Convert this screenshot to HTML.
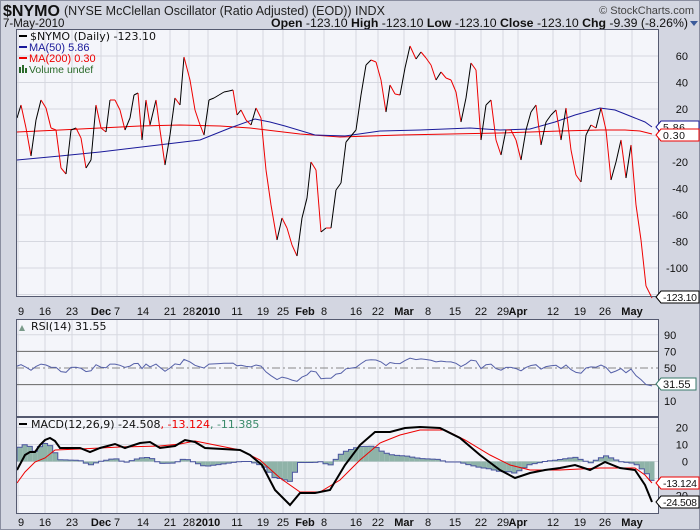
<!DOCTYPE html>
<html><head><meta charset="utf-8"><style>
body{margin:0;background:#d3d6e1;width:700px;height:530px;overflow:hidden;font-family:"Liberation Sans",sans-serif}
svg{position:absolute;left:0;top:0}
</style></head><body>
<svg id="s" width="700" height="530" xmlns="http://www.w3.org/2000/svg" font-family="Liberation Sans, sans-serif">
<rect x="0" y="0" width="700" height="530" fill="#d3d6e1"/>
<rect x="0.5" y="0.5" width="699" height="529" fill="none" stroke="#8a8ea0"/>
<text x="3" y="16" font-size="16" font-weight="bold" fill="#111">$NYMO</text>
<text x="64" y="15" font-size="12.5" fill="#222">(NYSE McClellan Oscillator (Ratio Adjusted) (EOD))  INDX</text>
<text x="3" y="27" font-size="11.5" fill="#111">7-May-2010</text>
<text x="694" y="14" font-size="11" fill="#444" text-anchor="end">© StockCharts.com</text>
<text x="688" y="27" font-size="12.3" fill="#111" text-anchor="end"><tspan font-weight="bold">Open</tspan> -123.10  <tspan font-weight="bold">High</tspan> -123.10  <tspan font-weight="bold">Low</tspan> -123.10  <tspan font-weight="bold">Close</tspan> -123.10  <tspan font-weight="bold">Chg</tspan> -9.39 (-8.26%)</text>
<path d="M690 21 L698 21 L694 26Z" fill="#3a5a9a"/>
<g id="g"></g>
</svg>
<script>
var g=document.getElementById('g'),h='';
function P(a){return a.map(function(p){return p[0]+','+p[1]}).join(' ')}
var L=16,R=659;
var xs=[18,45,72,101,117,143,170,189,208,237,263,283,305,324,356,378,404,428,455,481,503,518,553,580,605,632];
var xl=['9','16','23','Dec','7','14','21','28','2010','11','19','25','Feb','8','16','22','Mar','8','15','22','29','Apr','12','19','26','May'];
var bold={3:1,8:1,12:1,16:1,21:1,25:1};
function panel(t,b){
 h+='<rect x="'+L+'" y="'+t+'" width="'+(R-L)+'" height="'+(b-t)+'" fill="#f4f5fa"/>';
 xs.forEach(function(x){h+='<line x1="'+x+'" y1="'+t+'" x2="'+x+'" y2="'+b+'" stroke="#d6d8e0"/>';});
}
function border(t,b){h+='<rect x="'+(L+.5)+'" y="'+(t+.5)+'" width="'+(R-L-1)+'" height="'+(b-t-1)+'" fill="none" stroke="#555a70"/>';}
function dates(y){xs.forEach(function(x,i){h+='<text x="'+x+'" y="'+y+'" font-size="11" '+(bold[i]?'font-weight="bold" font-size="12"':'')+' text-anchor="'+(i==0?'start':'middle')+'" fill="#111">'+xl[i]+'</text>';});}
panel(29,297);
function my(v){return 135.5-v*1.325}
for(var v=-120;v<=80;v+=20){var y=my(v);h+='<line x1="'+L+'" y1="'+y+'" x2="'+R+'" y2="'+y+'" stroke="#d6d8e0"/>';if(v>-120&&v<80)h+='<text x="688" y="'+(y+4)+'" font-size="11" text-anchor="end" fill="#111">'+v+'</text>';}
var ny=[[17,118],[21,105],[26,128],[31,156],[36,120],[41,100],[46,108],[51,128],[56,130],[61,168],[66,174],[71,130],[76,128],[81,138],[86,168],[91,160],[96,105],[101,128],[106,132],[110,100],[115,100],[120,110],[125,130],[130,118],[134,95],[138,93],[142,140],[146,100],[150,125],[156,100],[160,130],[165,165],[170,135],[175,98],[180,105],[184,57],[190,80],[195,110],[199,122],[204,135],[209,100],[214,98],[219,95],[224,92],[229,91],[233,90],[237,115],[241,110],[246,120],[251,125],[256,108],[261,118],[266,170],[271,205],[277,240],[282,218],[287,228],[292,245],[297,256],[302,218],[307,198],[311,162],[316,170],[321,232],[326,228],[331,228],[336,190],[341,183],[346,142],[351,136],[356,130],[361,95],[366,65],[371,60],[376,62],[381,80],[386,112],[390,85],[395,94],[400,95],[405,68],[410,46],[416,59],[421,52],[426,58],[431,65],[436,80],[441,72],[446,78],[451,80],[456,92],[461,122],[466,98],[471,63],[476,70],[481,140],[486,105],[491,100],[496,140],[501,155],[506,130],[511,130],[516,140],[521,160],[526,130],[531,112],[536,105],[541,145],[546,122],[551,115],[556,110],[561,140],[566,108],[571,150],[576,175],[581,182],[586,135],[591,125],[596,128],[601,108],[606,130],[611,180],[616,162],[621,140],[626,178],[631,145],[636,205],[641,240],[646,286],[652,298]];
var ma50=[[17,160],[60,156],[100,152],[150,146],[200,140],[230,128],[255,119],[270,122],[285,126],[315,135],[345,136],[380,131],[420,130],[470,128],[500,130],[530,129],[555,122],[575,115],[600,108],[615,110],[630,116],[645,122],[652,127]];
var ma200=[[17,132],[60,130],[100,128],[140,126],[180,125],[220,126],[250,128],[300,134],[340,137],[400,135],[450,134],[500,133],[560,131],[600,130],[625,130],[640,131],[652,134]];
h+='<polyline points="'+P(ma200)+'" fill="none" stroke="#e00" stroke-width="1"/>';
h+='<polyline points="'+P(ma50)+'" fill="none" stroke="#1a1a9a" stroke-width="1"/>';
for(var i=1;i<ny.length;i++){var a=ny[i-1],b=ny[i];h+='<line x1="'+a[0]+'" y1="'+a[1]+'" x2="'+b[0]+'" y2="'+b[1]+'" stroke="'+(b[1]<a[1]?'#000':'#e00')+'"/>';}
border(29,297);
h+='<rect x="19" y="35" width="8" height="2" fill="#000"/><text x="30" y="40" font-size="11" fill="#111" font-family="DejaVu Sans">$NYMO (Daily) -123.10</text>';
h+='<rect x="19" y="46" width="8" height="2" fill="#1a1a9a"/><text x="29" y="51" font-size="11" fill="#1a1a9a">MA(50) 5.86</text>';
h+='<rect x="19" y="57" width="8" height="2" fill="#e00"/><text x="29" y="62" font-size="11" fill="#e00">MA(200) 0.30</text>';
h+='<rect x="19" y="67" width="2" height="6" fill="#2a6a2a"/><rect x="22" y="65" width="2" height="8" fill="#2a6a2a"/><rect x="25" y="68" width="2" height="5" fill="#2a6a2a"/><text x="29" y="73" font-size="10.5" fill="#2a6a2a">Volume undef</text>';
function tag(y,txt,col){h+='<path d="M656 '+y+' L661 '+(y-6)+' L699 '+(y-6)+' L699 '+(y+6)+' L661 '+(y+6)+'Z" fill="#fff" stroke="'+col+'"/><text x="663" y="'+(y+4)+'" font-size="10.5" fill="#111" textLength="'+(txt.length>5?34:22)+'">'+txt+'</text>';}
tag(127,'5.86','#1a1a9a');tag(135,'0.30','#e00');tag(297,'-123.10','#000');
dates(315);
panel(319,417);
function ry(v){return 368-(v-50)*0.83}
[10,30,50,70,90].forEach(function(v){var y=ry(v);h+='<line x1="'+L+'" y1="'+y+'" x2="'+R+'" y2="'+y+'" stroke="'+((v==30||v==70)?'#666':(v==50?'#888':'#d6d8e0'))+'" '+(v==50?'stroke-dasharray="8,3,2,3"':'')+'/><text x="664" y="'+(y+4)+'" font-size="11" fill="#111">'+v+'</text>';});
var rs=ny.map(function(p){return [p[0],(368+(p[1]-135)*0.11).toFixed(1)]});
h+='<polyline points="'+P(rs)+'" fill="none" stroke="#5560a8"/>';
border(319,417);
h+='<path d="M19 331 L22 325 L25 331Z" fill="#7a9a8a"/><text x="31" y="330" font-size="11" fill="#111" font-family="DejaVu Sans">RSI(14) 31.55</text>';
h+='<path d="M656 384 L661 378 L696 378 L696 390 L661 390Z" fill="#fff" stroke="#3a7a6a"/><text x="663" y="388" font-size="11" fill="#111">31.55</text>';
panel(417,514);
function zy(v){return 461.5-v*1.7}
[-20,-10,0,10,20].forEach(function(v){var y=zy(v);h+='<line x1="'+L+'" y1="'+y+'" x2="'+R+'" y2="'+y+'" stroke="#d6d8e0"/>';if(v>=0||v==-20)h+='<text x="688" y="'+(y+4)+'" font-size="11" text-anchor="end" fill="#111">'+v+'</text>';});
var mb=[[17,470],[25,455],[30,452],[35,452],[40,445],[45,440],[50,438],[55,441],[60,448],[80,448],[90,452],[100,448],[115,444],[125,448],[140,443],[150,442],[160,448],[175,446],[185,440],[195,442],[205,448],[240,450],[250,455],[262,465],[275,490],[290,505],[300,493],[315,493],[330,490],[345,465],[360,445],[375,432],[390,432],[405,428],[420,427],[440,428],[460,438],[480,455],[500,470],[515,478],[530,473],[545,470],[560,468],[575,465],[590,470],[605,462],[620,468],[635,470],[645,485],[652,502]];
var ms=[[17,483],[25,472],[35,462],[45,458],[55,450],[80,449],[120,447],[160,446],[180,444],[195,441],[215,445],[240,450],[260,460],[280,478],[300,492],[320,492],[340,480],[360,460],[380,443],[400,435],[420,430],[445,430],[465,440],[490,455],[510,465],[530,470],[560,470],[600,468],[635,468],[645,475],[652,483]];
function interp(a,x){for(var i=1;i<a.length;i++){if(x<=a[i][0]){var p=a[i-1],q=a[i];return p[1]+(q[1]-p[1])*(x-p[0])/(q[0]-p[0]);}}return a[a.length-1][1];}
var step='M17 461.5 ';
for(var x=17;x<652;x+=5.1){var d=interp(mb,x+2.5)-interp(ms,x+2.5);var yb=461.5+d;
 h+='<rect x="'+x.toFixed(1)+'" y="'+Math.min(yb,461.5).toFixed(1)+'" width="5.1" height="'+Math.abs(d).toFixed(1)+'" fill="#8fb3a8"/>';
 step+='L'+x.toFixed(1)+' '+yb.toFixed(1)+' L'+(x+5.1).toFixed(1)+' '+yb.toFixed(1)+' ';}
h+='<path d="'+step+'" fill="none" stroke="#4a55a0"/>';
h+='<polyline points="'+P(ms)+'" fill="none" stroke="#e00"/>';
h+='<polyline points="'+P(mb)+'" fill="none" stroke="#000" stroke-width="2"/>';
border(417,514);
h+='<rect x="19" y="423" width="8" height="2" fill="#000"/><text x="31" y="428" font-size="11" fill="#111" font-family="DejaVu Sans">MACD(12,26,9) -24.508<tspan fill="#e00">, -13.124</tspan><tspan fill="#3a8a6a">, -11.385</tspan></text>';
tag(483,'-13.124','#e00');tag(502,'-24.508','#000');
dates(526);
g.innerHTML=h;
</script>
</body></html>
